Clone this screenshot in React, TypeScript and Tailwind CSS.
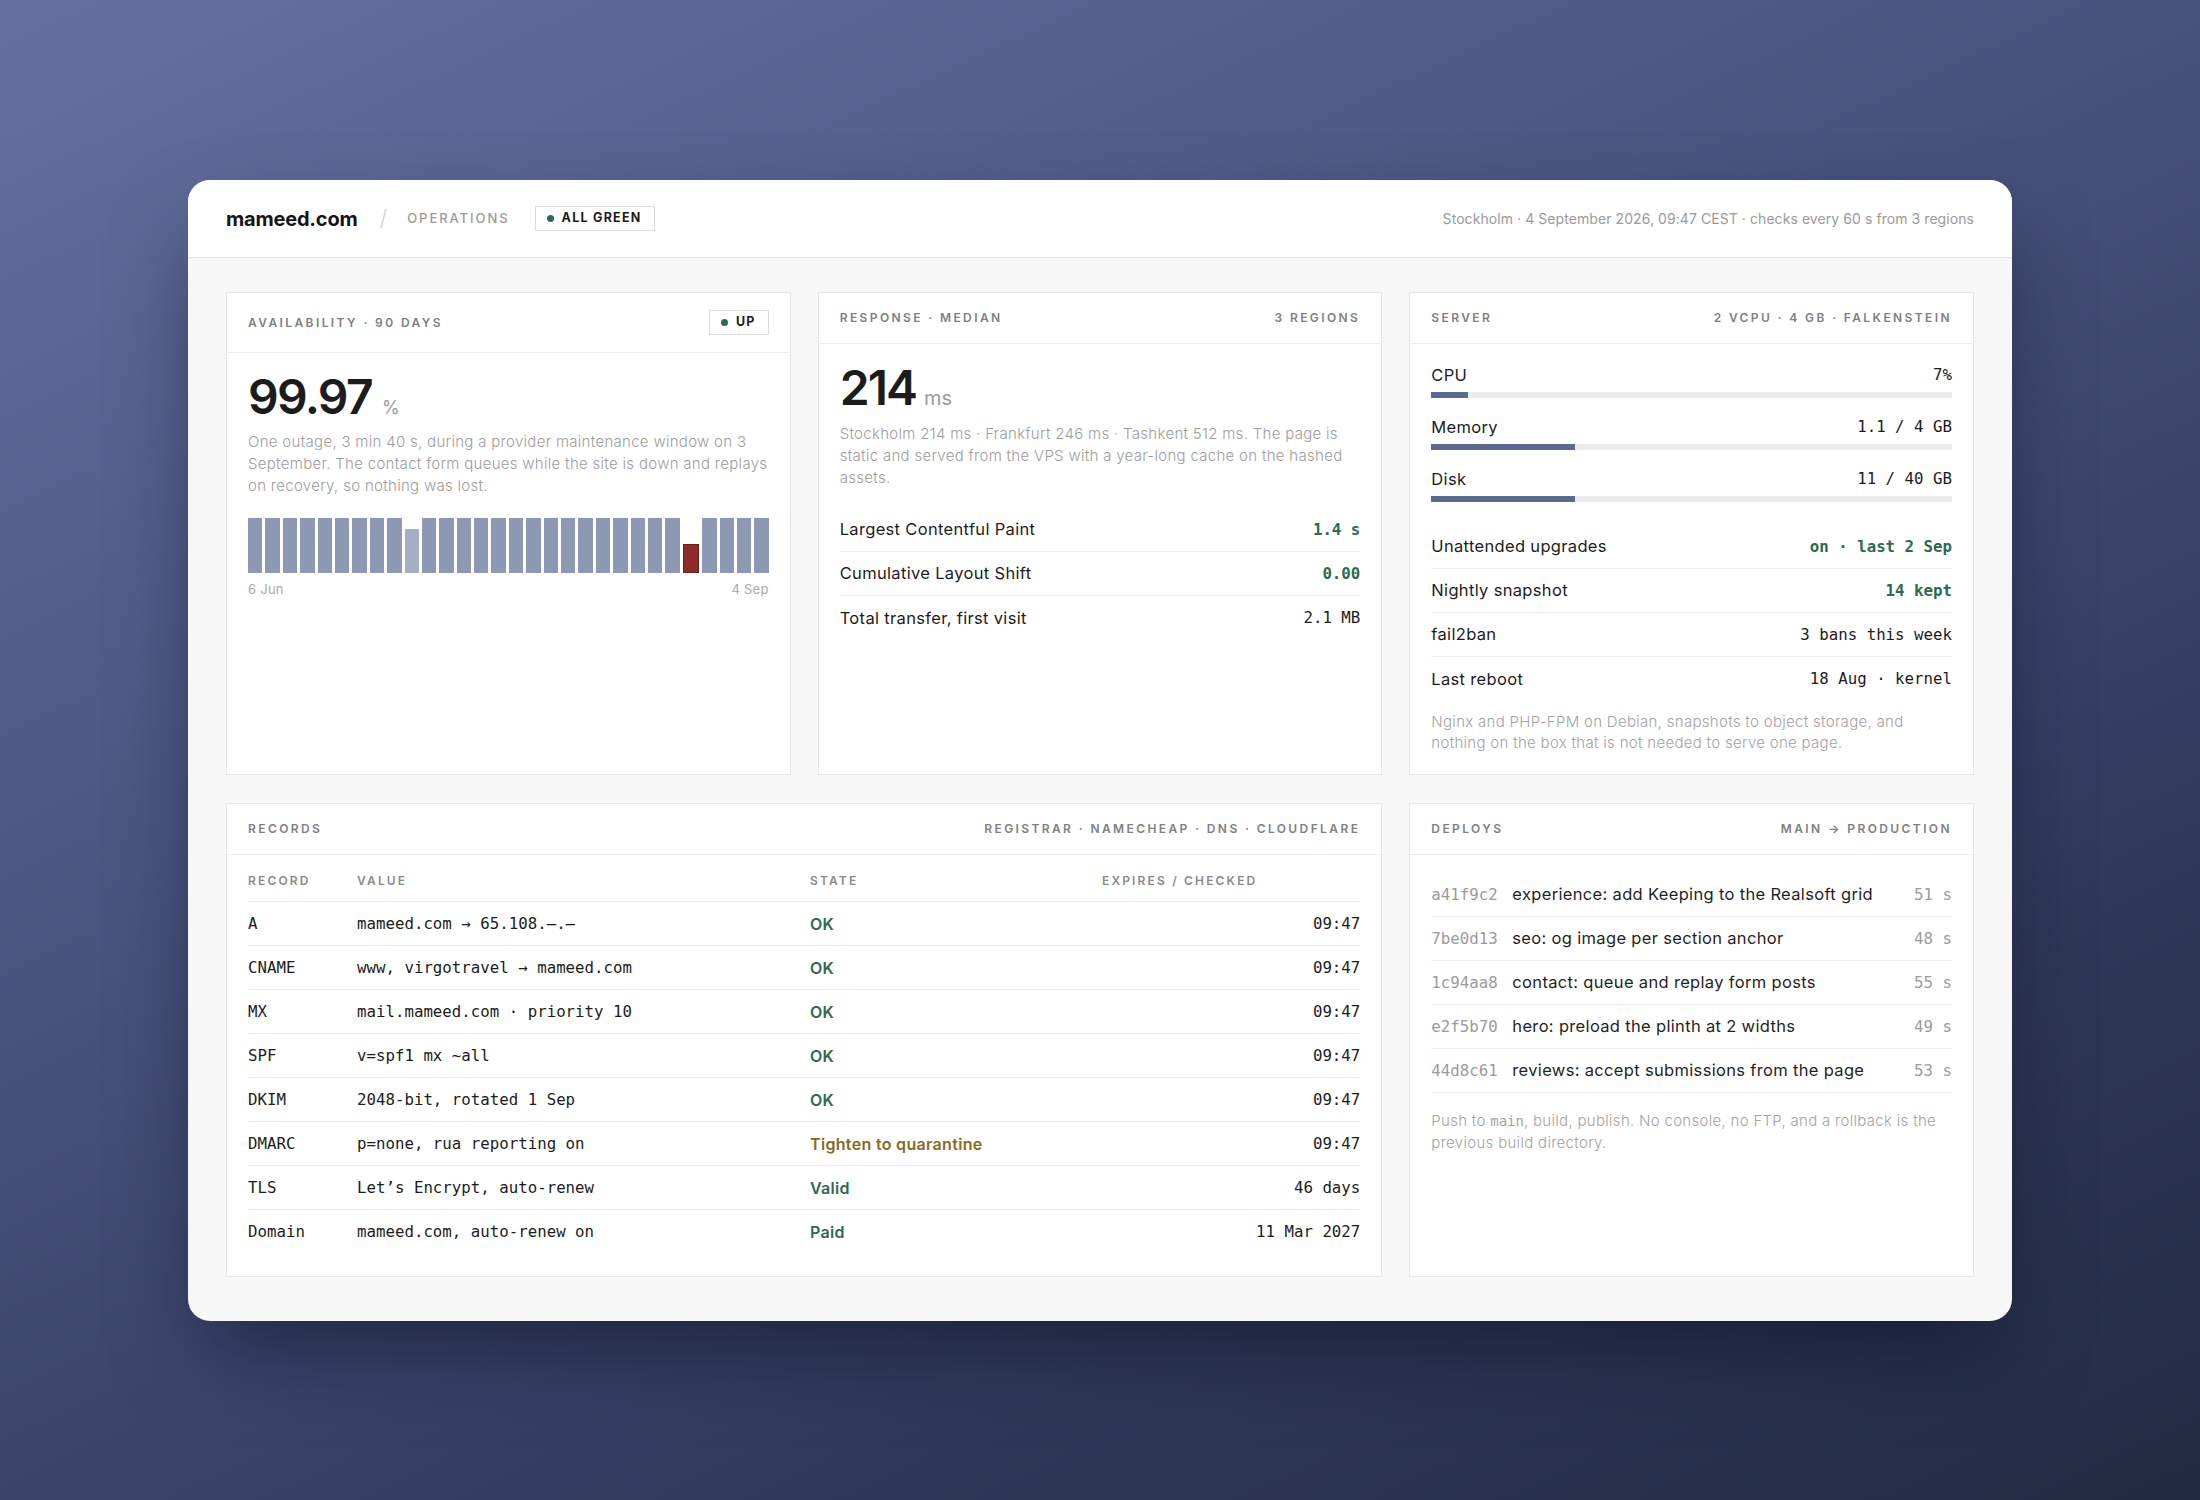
import React from "react";

type Tone = "ok" | "warn" | "plain";

const records: { name: string; value: string; state: string; tone: Tone; when: string }[] = [
  { name: "A", value: "mameed.com → 65.108.–.–", state: "OK", tone: "ok", when: "09:47" },
  { name: "CNAME", value: "www, virgotravel → mameed.com", state: "OK", tone: "ok", when: "09:47" },
  { name: "MX", value: "mail.mameed.com · priority 10", state: "OK", tone: "ok", when: "09:47" },
  { name: "SPF", value: "v=spf1 mx ~all", state: "OK", tone: "ok", when: "09:47" },
  { name: "DKIM", value: "2048-bit, rotated 1 Sep", state: "OK", tone: "ok", when: "09:47" },
  { name: "DMARC", value: "p=none, rua reporting on", state: "Tighten to quarantine", tone: "warn", when: "09:47" },
  { name: "TLS", value: "Let’s Encrypt, auto-renew", state: "Valid", tone: "ok", when: "46 days" },
  { name: "Domain", value: "mameed.com, auto-renew on", state: "Paid", tone: "ok", when: "11 Mar 2027" },
];

const deploys = [
  { hash: "a41f9c2", msg: "experience: add Keeping to the Realsoft grid", time: "51 s" },
  { hash: "7be0d13", msg: "seo: og image per section anchor", time: "48 s" },
  { hash: "1c94aa8", msg: "contact: queue and replay form posts", time: "55 s" },
  { hash: "e2f5b70", msg: "hero: preload the plinth at 2 widths", time: "49 s" },
  { hash: "44d8c61", msg: "reviews: accept submissions from the page", time: "53 s" },
];

const usage = [
  { label: "CPU", value: "7%", pct: 7 },
  { label: "Memory", value: "1.1 / 4 GB", pct: 27.5 },
  { label: "Disk", value: "11 / 40 GB", pct: 27.5 },
];

const serverRows: { label: string; value: string; good?: boolean }[] = [
  { label: "Unattended upgrades", value: "on · last 2 Sep", good: true },
  { label: "Nightly snapshot", value: "14 kept", good: true },
  { label: "fail2ban", value: "3 bans this week" },
  { label: "Last reboot", value: "18 Aug · kernel" },
];

const webVitals: { label: string; value: string; good?: boolean }[] = [
  { label: "Largest Contentful Paint", value: "1.4 s", good: true },
  { label: "Cumulative Layout Shift", value: "0.00", good: true },
  { label: "Total transfer, first visit", value: "2.1 MB" },
];

// 30 buckets of 3 days, one degraded, one with the outage
const bars = Array.from({ length: 30 }, (_, i) => (i === 9 ? "slow" : i === 25 ? "down" : "ok"));

const mono = "font-['DejaVu_Sans_Mono',monospace] text-[15.75px]";
const body = "text-[16.5px] tracking-[0.02em]";

function Label({ children }: { children: React.ReactNode }) {
  return (
    <span className="text-[12px] leading-4 font-semibold tracking-[0.2em] text-[#808080] uppercase whitespace-nowrap">
      {children}
    </span>
  );
}

function Badge({ children }: { children: React.ReactNode }) {
  return (
    <span className="h-[25px] pl-[11px] pr-[12px] border border-[#dcdcdc] bg-white flex items-center gap-[8px]">
      <span className="w-[7px] h-[7px] rounded-full bg-[#2d6a4f]" />
      <span className="text-[12.5px] font-bold tracking-[0.1em] text-[#1c1c1c]">{children}</span>
    </span>
  );
}

function Card({
  title,
  right,
  className,
  children,
}: {
  title: string;
  right?: React.ReactNode;
  className?: string;
  children: React.ReactNode;
}) {
  return (
    <section className={`bg-white border border-[#e6e6e6] flex flex-col ${className ?? ""}`}>
      <header className="flex items-center justify-between px-[21px] py-[17px] border-b border-[#ededed]">
        <Label>{title}</Label>
        {right}
      </header>
      {children}
    </section>
  );
}

function Row({ label, value, good }: { label: string; value: string; good?: boolean }) {
  return (
    <div className="h-[44px] flex items-center justify-between">
      <span className={body}>{label}</span>
      <span className={`${mono} ${good ? "font-bold text-[#2d6a4f]" : "text-[#1c1c1c]"}`}>{value}</span>
    </div>
  );
}

export default function App() {
  return (
    <div className="min-h-screen w-full bg-[linear-gradient(155deg,#6571a0_0%,#48537e_40%,#2f3858_75%,#222a43_100%)] pt-[180px] pb-[180px] font-['Inter',sans-serif] text-[#1c1c1c]">
      <div className="mx-auto w-[1824px] rounded-[22px] overflow-hidden bg-[#f7f7f7] shadow-[0_40px_90px_-20px_rgba(10,15,35,0.6)]">
        {/* top bar */}
        <div className="h-[78px] px-[38px] bg-white border-b border-[#e4e4e4] flex items-center justify-between">
          <div className="flex items-center">
            <span className="text-[20px] font-bold tracking-[-0.01em] text-[#151515]">mameed.com</span>
            <span className="ml-[22px] text-[22px] font-light text-[#d2d2d2]">/</span>
            <span className="ml-[20px] text-[13px] font-medium tracking-[0.15em] text-[#9a9a9a]">OPERATIONS</span>
            <span className="ml-[25px]">
              <Badge>ALL GREEN</Badge>
            </span>
          </div>
          <span className="text-[14px] tracking-[0.005em] text-[#9a9a9a]">
            Stockholm · 4 September 2026, 09:47 CEST · checks every 60 s from 3 regions
          </span>
        </div>

        <div className="px-[38px] pt-[34px] pb-[44px] grid grid-cols-3 gap-x-[27px] gap-y-[28px]">
          {/* availability */}
          <Card title="Availability · 90 days" right={<Badge>UP</Badge>}>
            <div className="px-[21px] pt-[20px]">
              <div className="flex items-baseline gap-[10px]">
                <span className="text-[48px] leading-[48px] font-semibold tracking-[-0.035em]">99.97</span>
                <span className="text-[18px] text-[#9a9a9a]">%</span>
              </div>
              <p className="mt-[10px] text-[15px] leading-[22px] tracking-[0.02em] font-light text-[#9d9d9d]">
                One outage, 3 min 40 s, during a provider maintenance window on 3 September. The contact form
                queues while the site is down and replays on recovery, so nothing was lost.
              </p>
              <div className="mt-[21px] h-[55px] flex items-end gap-[3px]">
                {bars.map((b, i) =>
                  b === "slow" ? (
                    <div key={i} className="flex-1 h-[44px] bg-[#a6aec4]" />
                  ) : b === "down" ? (
                    <div key={i} className="flex-1 h-[29px] bg-[#8d2b2b] border border-[#6f1e1e]" />
                  ) : (
                    <div key={i} className="flex-1 h-full bg-[#8d98b5]" />
                  )
                )}
              </div>
              <div className="mt-[8px] flex justify-between text-[13px] leading-4 tracking-[0.02em] text-[#a9a9a9]">
                <span>6 Jun</span>
                <span>4 Sep</span>
              </div>
            </div>
          </Card>

          {/* response */}
          <Card title="Response · median" right={<Label>3 regions</Label>}>
            <div className="px-[21px] pt-[20px]">
              <div className="flex items-baseline gap-[8px]">
                <span className="text-[48px] leading-[48px] font-semibold tracking-[-0.04em]">214</span>
                <span className="text-[20px] text-[#9a9a9a]">ms</span>
              </div>
              <p className="mt-[10px] text-[15px] leading-[22px] tracking-[0.02em] font-light text-[#9d9d9d]">
                Stockholm 214 ms · Frankfurt 246 ms · Tashkent 512 ms. The page is static and served from the VPS
                with a year-long cache on the hashed assets.
              </p>
              <div className="mt-[19px] divide-y divide-[#ececec]">
                {webVitals.map((r) => (
                  <Row key={r.label} {...r} />
                ))}
              </div>
            </div>
          </Card>

          {/* server */}
          <Card title="Server" right={<Label>2 vCPU · 4 GB · Falkenstein</Label>}>
            <div className="px-[21px] pt-[19px] pb-[21px]">
              <div className="flex flex-col gap-[17px]">
                {usage.map((u) => (
                  <div key={u.label}>
                    <div className="h-[24px] flex items-center justify-between">
                      <span className={body}>{u.label}</span>
                      <span className={mono}>{u.value}</span>
                    </div>
                    <div className="mt-[5px] h-[6px] bg-[#ececec]">
                      <div className="h-full bg-[#5e6991]" style={{ width: `${u.pct}%` }} />
                    </div>
                  </div>
                ))}
              </div>
              <div className="mt-[23px] divide-y divide-[#ececec]">
                {serverRows.map((r) => (
                  <Row key={r.label} {...r} />
                ))}
              </div>
              <p className="mt-[10px] text-[15px] leading-[21px] tracking-[0.02em] font-light text-[#a3a3a3]">
                Nginx and PHP-FPM on Debian, snapshots to object storage, and nothing on the box that is not
                needed to serve one page.
              </p>
            </div>
          </Card>

          {/* records */}
          <Card
            title="Records"
            right={<Label>Registrar · Namecheap · DNS · Cloudflare</Label>}
            className="col-span-2"
          >
            <div className="px-[21px] pt-[5px] pb-[22px]">
              <div className="h-[42px] grid grid-cols-[109px_453px_292px_1fr] items-center border-b border-[#ececec] text-[12px] font-semibold tracking-[0.18em] text-[#8a8a8a]">
                <span>RECORD</span>
                <span>VALUE</span>
                <span>STATE</span>
                <span>EXPIRES / CHECKED</span>
              </div>
              {records.map((r, i) => (
                <div
                  key={r.name}
                  className={`h-[44px] grid grid-cols-[109px_453px_292px_1fr] items-center ${
                    i < records.length - 1 ? "border-b border-[#ececec]" : ""
                  }`}
                >
                  <span className={mono}>{r.name}</span>
                  <span className={mono}>{r.value}</span>
                  <span
                    className={`text-[16px] tracking-[0.02em] font-semibold ${
                      r.tone === "warn" ? "text-[#8a6b1c]" : "text-[#2d6a4f]"
                    }`}
                  >
                    {r.state}
                  </span>
                  <span className={`${mono} text-right`}>{r.when}</span>
                </div>
              ))}
            </div>
          </Card>

          {/* deploys */}
          <Card title="Deploys" right={<Label>main → production</Label>}>
            <div className="px-[21px] pt-[18px] pb-[20px]">
              {deploys.map((d) => (
                <div key={d.hash} className="h-[44px] flex items-center border-b border-[#ececec]">
                  <span className={`${mono} w-[81px] shrink-0 text-[#9b9b9b]`}>{d.hash}</span>
                  <span className={`flex-1 ${body} text-[#1f1f1f]`}>{d.msg}</span>
                  <span className={`${mono} text-[#9b9b9b]`}>{d.time}</span>
                </div>
              ))}
              <p className="mt-[17px] text-[15px] leading-[22px] tracking-[0.02em] font-light text-[#a3a3a3]">
                Push to <span className="font-['DejaVu_Sans_Mono',monospace] text-[14px] tracking-normal">main</span>,
                build, publish. No console, no FTP, and a rollback is the previous build directory.
              </p>
            </div>
          </Card>
        </div>
      </div>
    </div>
  );
}
